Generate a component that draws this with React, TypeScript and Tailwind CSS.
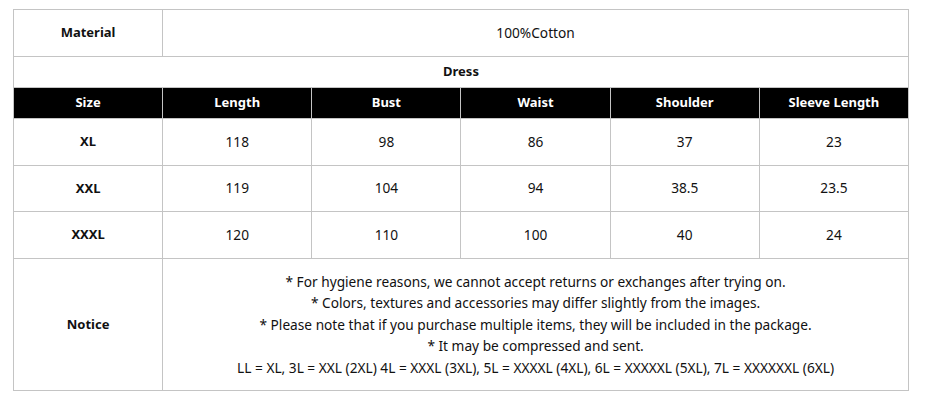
const columns = ["Size", "Length", "Bust", "Waist", "Shoulder", "Sleeve Length"];

const sizes = [
  { size: "XL", values: ["118", "98", "86", "37", "23"], h: "h-[47px]" },
  { size: "XXL", values: ["119", "104", "94", "38.5", "23.5"], h: "h-[46px]" },
  { size: "XXXL", values: ["120", "110", "100", "40", "24"], h: "h-[47px]" },
];

const notices = [
  "* For hygiene reasons, we cannot accept returns or exchanges after trying on.",
  "* Colors, textures and accessories may differ slightly from the images.",
  "* Please note that if you purchase multiple items, they will be included in the package.",
  "* It may be compressed and sent.",
  "LL = XL, 3L = XXL (2XL) 4L = XXXL (3XL), 5L = XXXXL (4XL), 6L = XXXXXL (5XL), 7L = XXXXXXL (6XL)",
];

const cell = "border border-[#c4c4c4] text-center align-middle";
const bold = "text-[13px] font-bold";

export default function App() {
  return (
    <div className="h-[406px] w-[928px] bg-white pl-[13px] pt-[9px] font-['Noto_Sans','Open_Sans',sans-serif] text-[13.7px] text-[#111]">
      <table className="w-[896px] table-fixed border-collapse">
        <colgroup>
          {columns.map((c) => (
            <col key={c} className="w-[149px]" />
          ))}
        </colgroup>
        <tbody>
          <tr className="h-[47px]">
            <td className={`${cell} ${bold}`}>Material</td>
            <td className={cell} colSpan={5}>100%Cotton</td>
          </tr>
          <tr className="h-[31px]">
            <td className={`${cell} ${bold}`} colSpan={6}>Dress</td>
          </tr>
          <tr className="h-[31px] bg-black text-white">
            {columns.map((c) => (
              <td key={c} className={`${cell} ${bold}`}>{c}</td>
            ))}
          </tr>
          {sizes.map((row) => (
            <tr key={row.size} className={row.h}>
              <td className={`${cell} ${bold}`}>{row.size}</td>
              {row.values.map((v, i) => (
                <td key={i} className={cell}>{v}</td>
              ))}
            </tr>
          ))}
          <tr className="h-[132px]">
            <td className={`${cell} ${bold}`}>Notice</td>
            <td className={`${cell} leading-[21.5px]`} colSpan={5}>
              {notices.map((n) => (
                <p key={n}>{n}</p>
              ))}
            </td>
          </tr>
        </tbody>
      </table>
    </div>
  );
}
